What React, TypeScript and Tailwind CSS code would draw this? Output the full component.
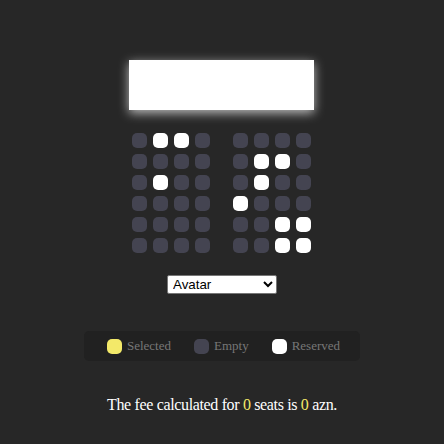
import { useState } from "react";

// 6 rows x 8 seats, true = reserved
const reserved: boolean[][] = [
  [false, true, true, false, false, false, false, false],
  [false, false, false, false, false, true, true, false],
  [false, true, false, false, false, true, false, false],
  [false, false, false, false, true, false, false, false],
  [false, false, false, false, false, false, true, true],
  [false, false, false, false, false, false, true, true],
];

const movies = [
  { name: "Avatar", price: 10 },
  { name: "Joker", price: 12 },
  { name: "Toy Story 4", price: 8 },
];

function Seat({ status, extra = "" }: { status: "empty" | "reserved" | "selected"; extra?: string }) {
  const color =
    status === "reserved" ? "bg-white" : status === "selected" ? "bg-[#f3e969]" : "bg-[#444451]";
  return <div className={`w-[15px] h-[15px] m-[3px] rounded-[5px] ${color} ${extra}`} />;
}

export default function App() {
  const [movie, setMovie] = useState(movies[0].name);
  const selectedCount = 0;
  const price = movies.find((m) => m.name === movie)?.price || 0;

  return (
    <div className="min-h-[444px] bg-[#272727] flex flex-col items-center pt-[60px] font-['Liberation_Serif',serif]">
      <div className="w-[185px] h-[50px] -ml-[1px] bg-white shadow-[0_3px_10px_rgba(255,255,255,0.7)]" />

      <div className="mt-[20px] -ml-[1px] flex flex-col">
        {reserved.map((row, r) => (
          <div key={r} className="flex">
            {row.map((res, c) => (
              <Seat key={c} status={res ? "reserved" : "empty"} extra={c === 3 ? "mr-[20px]" : ""} />
            ))}
          </div>
        ))}
      </div>

      <select
        value={movie}
        onChange={(e) => setMovie(e.target.value)}
        className="mt-[19px] w-[110px] h-[19px] bg-white text-black border border-[#767676] rounded-[2px] text-[13.33px] font-['Liberation_Sans',Arial,sans-serif] pl-[1px]"
      >
        {movies.map((m) => (
          <option key={m.name} value={m.name}>
            {m.name}
          </option>
        ))}
      </select>

      <ul className="mt-[37px] flex bg-[#212121] rounded-[5px] px-[10px] h-[30px] items-center text-[#777] text-[13px]">
        <li className="flex items-center mx-[10px]">
          <Seat status="selected" />
          <small className="ml-[2px] text-[13px]">Selected</small>
        </li>
        <li className="flex items-center mx-[10px]">
          <Seat status="empty" />
          <small className="ml-[2px] text-[13px]">Empty</small>
        </li>
        <li className="flex items-center mx-[10px]">
          <Seat status="reserved" />
          <small className="ml-[2px] text-[13px]">Reserved</small>
        </li>
      </ul>

      <p className="mt-[32px] text-white text-[16px] tracking-[-0.35px]">
        The fee calculated for <span className="text-[#f3e969]">{selectedCount}</span> seats is{" "}
        <span className="text-[#f3e969]">{selectedCount * price}</span> azn.
      </p>
    </div>
  );
}
